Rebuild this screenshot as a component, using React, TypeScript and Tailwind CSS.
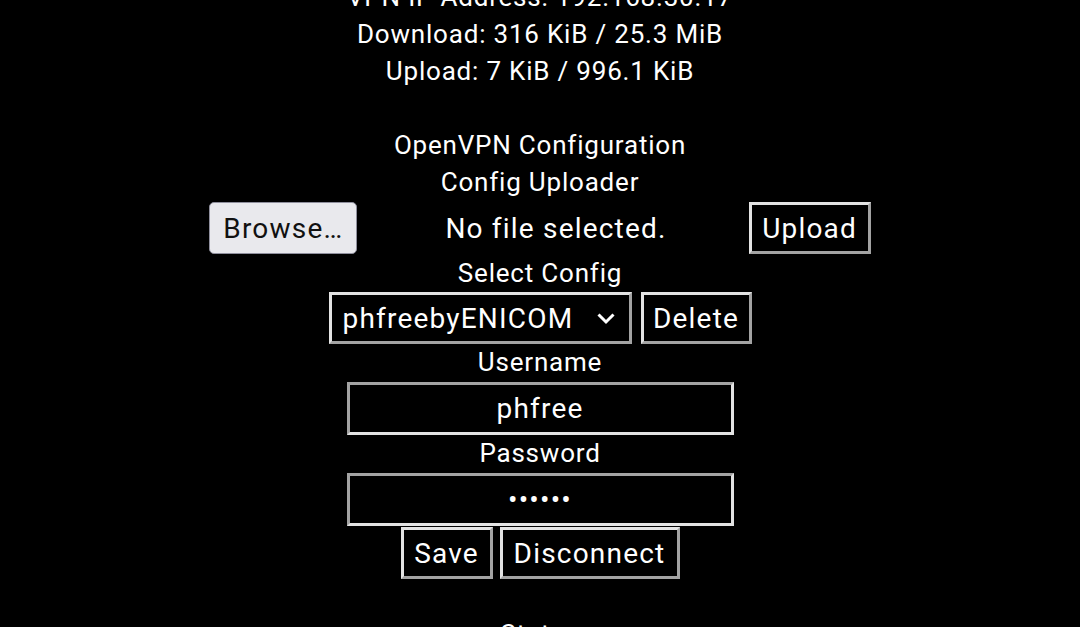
import { useState } from 'react';

const outset =
  'border-[3px] border-solid border-t-[#e3e3e3] border-l-[#e3e3e3] border-b-[#a3a3a3] border-r-[#a3a3a3]';
const inset =
  'border-[3px] border-solid border-t-[#a3a3a3] border-l-[#a3a3a3] border-b-[#e3e3e3] border-r-[#e3e3e3]';

const App = () => {
  const [config, setConfig] = useState('phfreebyENICOM');
  const [username, setUsername] = useState('phfree');
  const [password, setPassword] = useState('phfree');

  return (
    <div
      className="min-h-screen bg-black text-white text-[26px] leading-[37px] tracking-[0.8px] overflow-hidden"
      style={{ fontFamily: 'Roboto, "Noto Sans", sans-serif' }}
    >
      <div className="-mt-[21px] flex flex-col items-center text-center">
        <div>VPN IP Address: 192.168.30.17</div>
        <div>Download: 316 KiB / 25.3 MiB</div>
        <div>Upload: 7 KiB / 996.1 KiB</div>
        <div className="h-[37px]" />
        <div>OpenVPN Configuration</div>
        <div>Config Uploader</div>

        <div className="flex items-center h-[54px] text-[28px] tracking-[1.2px]">
          <button className="h-[52px] w-[148px] rounded-[5px] border border-[#8f8f9d] bg-[#e9e9ed] text-[#111]">
            Browse…
          </button>
          <span className="ml-[88px]">No file selected.</span>
          <button className={`ml-[82px] h-[52px] w-[122px] bg-black ${outset}`}>Upload</button>
        </div>

        <div>Select Config</div>
        <div className="flex items-center gap-[9px] h-[52px] text-[28px] tracking-[1.2px]">
          <div className={`relative h-[52px] w-[303px] bg-black ${outset}`}>
            <select
              value={config}
              onChange={(e) => setConfig(e.target.value)}
              className="h-full w-full appearance-none bg-black pl-[11px] text-left text-white outline-none"
            >
              <option value="phfreebyENICOM">phfreebyENICOM</option>
            </select>
            <svg
              className="pointer-events-none absolute right-[12px] top-[15px]"
              width="22"
              height="16"
              viewBox="0 0 22 16"
            >
              <path d="M3.5 4.5 L11 12 L18.5 4.5" fill="none" stroke="white" strokeWidth="3" />
            </svg>
          </div>
          <button className={`h-[52px] w-[111px] bg-black ${outset}`}>Delete</button>
        </div>

        <div>Username</div>
        <input
          value={username}
          onChange={(e) => setUsername(e.target.value)}
          className={`mt-[1px] h-[53px] w-[387px] bg-black text-center text-[28px] tracking-[1.2px] text-white outline-none ${inset}`}
        />
        <div>Password</div>
        <input
          type="password"
          value={password}
          onChange={(e) => setPassword(e.target.value)}
          className={`mt-[1px] h-[53px] w-[387px] bg-black text-center text-[28px] tracking-[1.2px] text-white outline-none ${inset}`}
        />

        <div className="mt-[1px] flex items-center gap-[7px] h-[52px] text-[28px] tracking-[1.2px]">
          <button className={`h-[52px] w-[92px] bg-black ${outset}`}>Save</button>
          <button className={`h-[52px] w-[180px] bg-black ${outset}`}>Disconnect</button>
        </div>

        <div className="h-[37px]" />
        <div>Status</div>
      </div>
    </div>
  );
};

export default App;
